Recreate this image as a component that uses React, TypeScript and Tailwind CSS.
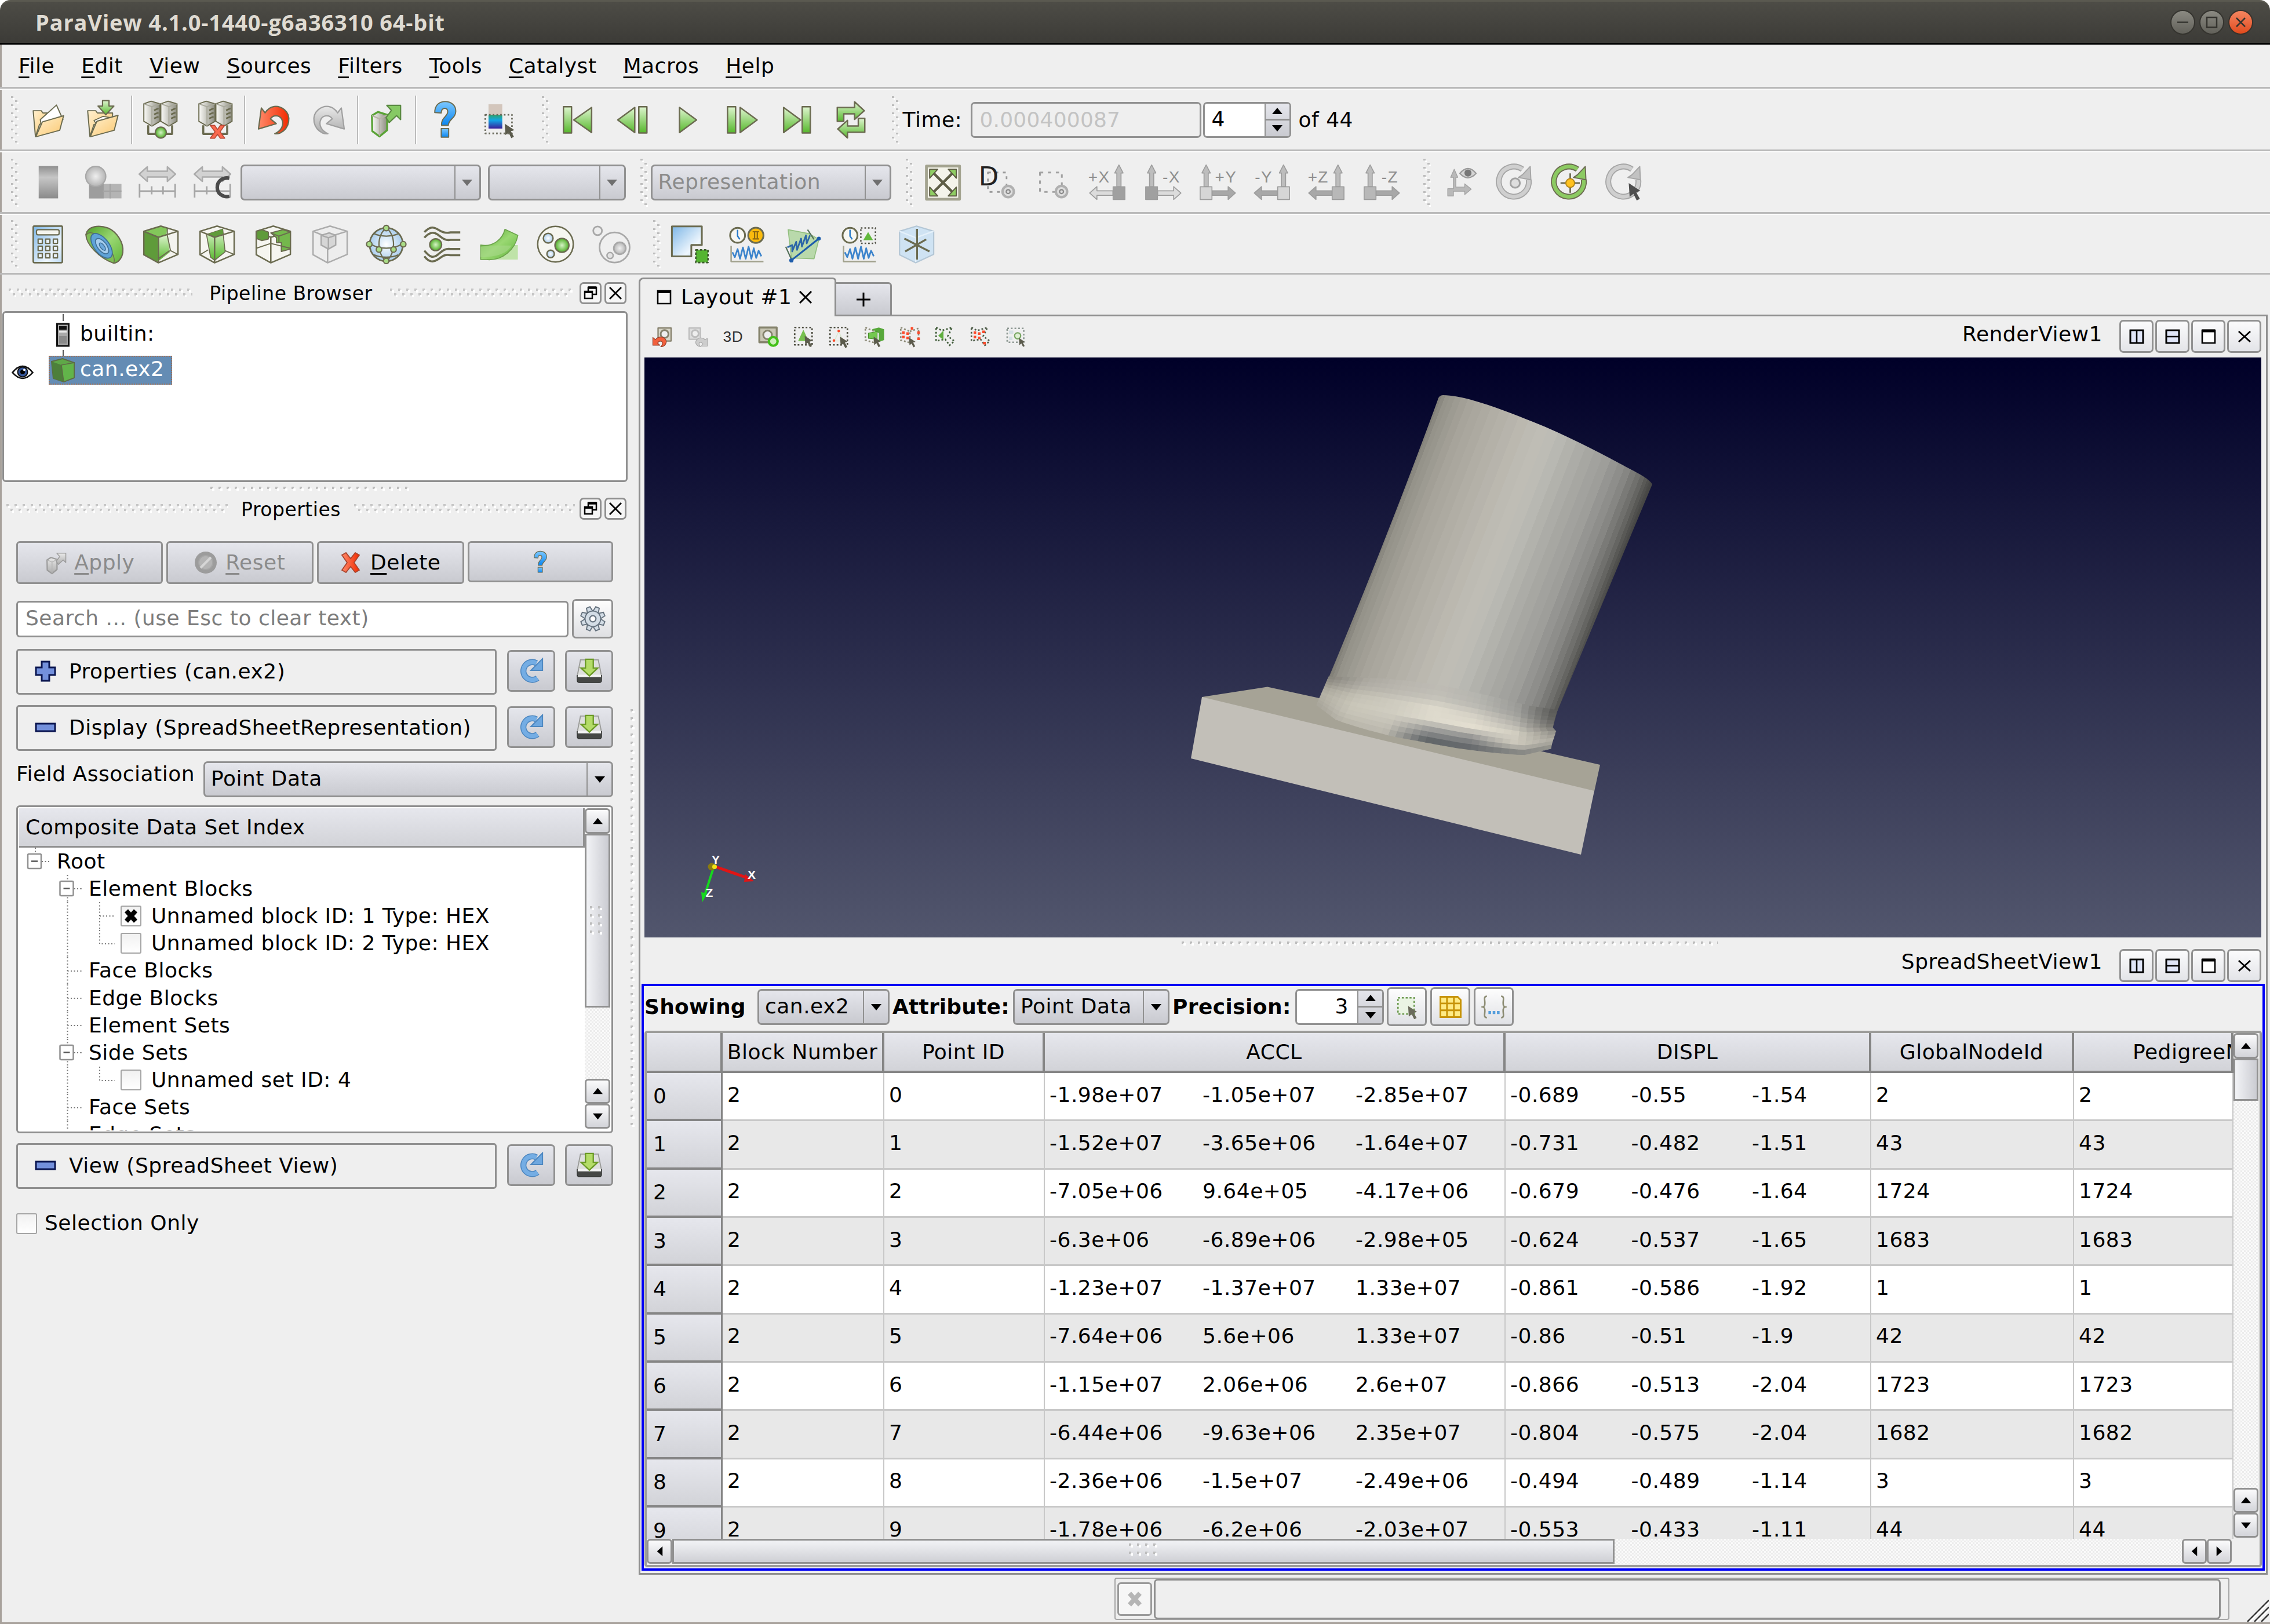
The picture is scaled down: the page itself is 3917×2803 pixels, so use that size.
import React from 'react';

type Kids = { children?: React.ReactNode };

const OL = '#6b6b50';
const G = '#a0a0a0';

/* ---------- shared paint definitions ---------- */
const Defs = () => (
  <svg width="0" height="0" className="absolute">
    <defs>
      <linearGradient id="gr" x1="0" y1="0" x2="0" y2="1"><stop offset="0" stopColor="#dff5d0" /><stop offset="1" stopColor="#56b82c" /></linearGradient>
      <linearGradient id="grh" x1="0" y1="0" x2="1" y2="1"><stop offset="0" stopColor="#4f9f28" /><stop offset=".5" stopColor="#9ad873" /><stop offset="1" stopColor="#5fb338" /></linearGradient>
      <radialGradient id="grr"><stop offset="0" stopColor="#d6f3c6" /><stop offset="1" stopColor="#4eae26" /></radialGradient>
      <radialGradient id="blr"><stop offset="0" stopColor="#ffffff" /><stop offset="1" stopColor="#a9cdec" /></radialGradient>
      <linearGradient id="bl" x1="0" y1="0" x2="1" y2="1"><stop offset="0" stopColor="#7db6e6" /><stop offset=".7" stopColor="#eef6fd" /><stop offset="1" stopColor="#b9d8f3" /></linearGradient>
      <linearGradient id="tan" x1="0" y1="0" x2="1" y2="1"><stop offset="0" stopColor="#fff0cf" /><stop offset="1" stopColor="#fbc870" /></linearGradient>
      <linearGradient id="sv" x1="0" y1="0" x2="1" y2="0"><stop offset="0" stopColor="#fbfbf8" /><stop offset="1" stopColor="#8d8d80" /></linearGradient>
      <linearGradient id="red" x1="0" y1="0" x2="1" y2="0"><stop offset="0" stopColor="#ff8a6a" /><stop offset="1" stopColor="#f32b00" /></linearGradient>
      <linearGradient id="gy" x1="0" y1="0" x2="0" y2="1"><stop offset="0" stopColor="#e9e9e9" /><stop offset="1" stopColor="#ababab" /></linearGradient>
      <radialGradient id="gyr"><stop offset="0" stopColor="#efefef" /><stop offset="1" stopColor="#b5b5b5" /></radialGradient>
      <linearGradient id="gyb" x1="0" y1="0" x2="0" y2="1"><stop offset="0" stopColor="#8f8f8f" /><stop offset=".35" stopColor="#c6c6c6" /><stop offset="1" stopColor="#8a8a8a" /></linearGradient>
      <linearGradient id="hb" x1="0" y1="0" x2="0" y2="1"><stop offset="0" stopColor="#7cc8ff" /><stop offset="1" stopColor="#0a86f0" /></linearGradient>
      <linearGradient id="rain" x1="0" y1="0" x2="0" y2="1"><stop offset="0" stopColor="#2aa36a" /><stop offset=".4" stopColor="#12a5e6" /><stop offset="1" stopColor="#3a1f9a" /></linearGradient>
      <pattern id="dotsH" width="14" height="18" patternUnits="userSpaceOnUse">
        <rect x="1" y="1" width="4" height="4" fill="#c6c6c6" /><rect x="4" y="4" width="4" height="4" fill="#fff" />
        <rect x="8" y="9" width="4" height="4" fill="#c6c6c6" /><rect x="11" y="12" width="3" height="4" fill="#fff" />
      </pattern>
      <pattern id="dots1" width="14" height="14" patternUnits="userSpaceOnUse">
        <rect x="1" y="1" width="4" height="4" fill="#bdbdbd" /><rect x="4" y="4" width="4" height="4" fill="#fff" />
      </pattern>
      <pattern id="dotsV" width="18" height="14" patternUnits="userSpaceOnUse">
        <rect x="1" y="1" width="4" height="3" fill="#bdbdbd" /><rect x="4" y="4" width="3" height="3" fill="#fff" />
        <rect x="8" y="8" width="4" height="3" fill="#bdbdbd" /><rect x="11" y="11" width="3" height="3" fill="#fff" />
      </pattern>
      <pattern id="hatch" width="6" height="6" patternUnits="userSpaceOnUse">
        <rect width="6" height="6" fill="#fafafa" /><rect width="3" height="3" fill="#ececec" /><rect x="3" y="3" width="3" height="3" fill="#ececec" />
      </pattern>
    </defs>
  </svg>
);

const Fill = ({ id, w, h }: { id: string; w: number; h: number }) => (
  <svg width={w} height={h} className="block shrink-0"><rect width={w} height={h} fill={`url(#${id})`} /></svg>
);

const Ic = ({ children, s = 67 }: Kids & { s?: number }) => (
  <svg width={s} height={s} viewBox="0 0 24 24" className="block shrink-0 overflow-visible" strokeLinejoin="round">{children}</svg>
);

/* ---------- main toolbar icons ---------- */
const FolderBase = () => (
  <path d="M2.6 6.5h5l1 1.4h3.4v4L6.5 15 4 22.5z" fill="url(#tan)" stroke={OL} strokeWidth=".7" />
);
const OpenIcon = () => (
  <Ic><FolderBase /><path d="M7 12 17 3l4 9-13 6z" fill="#fff" stroke={OL} strokeWidth=".7" /><path d="M8.3 13.4 21.4 9.6 19 18.6 4.2 22.6z" fill="url(#tan)" stroke={OL} strokeWidth=".7" /></Ic>
);
const OpenRecentIcon = () => (
  <Ic>
    <path d="M2.6 6.5h5l1 1.4H18v4L6.5 15 4 22.5z" fill="url(#tan)" stroke={OL} strokeWidth=".7" />
    <path d="M6.5 12.5 12 10l7 1-10 5z" fill="#fff" stroke={OL} strokeWidth=".6" />
    <path d="M8.3 13 21.4 9.3 19 18.6 4.2 22.6z" fill="url(#tan)" stroke={OL} strokeWidth=".7" />
    <path d="M11.8.2h4v3.4h3L13.8 9 9 3.6h2.8z" fill="url(#gr)" stroke={OL} strokeWidth=".8" />
  </Ic>
);
const Tower = ({ x }: { x: number }) => (
  <g transform={`translate(${x} 0)`} stroke={OL} strokeWidth=".7">
    <path d="M.5 2.2 5 .6l5.5 1.6V13l-5 3L.5 13z" fill="url(#sv)" />
    <path d="M.5 2.2 5.5 4v12M5.5 4l5-1.8" fill="none" stroke="#a9a99c" />
    <path d="M6.800 6.300 9.600 5M6.800 8.800l2.800-1.200M6.800 11.300l2.800-1.200" fill="none" strokeWidth="1" />
  </g>
);
const ServerIcon = ({ off }: { off?: boolean }) => (
  <Ic>
    <path d="M4.2 15.500v5.300H19v-5.300" fill="none" stroke={OL} strokeWidth="1.300" />
    <Tower x={1} /><Tower x={11.500} />
    {off
      ? <path d="M8.500 15.500h2.700l1.800 2.600 1.800-2.600h2.600L14.600 19.500l2.900 4h-2.800L13 21l-1.700 2.500H8.500l3-4z" fill="#fb6b50" stroke="#b94a36" strokeWidth=".6" />
      : <circle cx="12" cy="20" r="3.400" fill="url(#grr)" stroke={OL} strokeWidth=".8" />}
  </Ic>
);
const Curl = ({ fill, stroke, flip }: { fill: string; stroke: string; flip?: boolean }) => (
  <Ic>
    <g transform={flip ? 'matrix(-1 0 0 1 24 0)' : undefined}>
      <path d="M4.300 4.800 6.600 7.800C9.500 3.200 14.500 2.600 18.500 5.800c4.700 4 3.200 11.700-2.700 14.500-1 .4-2 .6-3.200.4 4-1.700 6-5.500 4.300-9-1.600-2.800-5.500-2.700-7-.2l3.600 3L2.500 17.800z" fill={fill} stroke={stroke} strokeWidth=".8" />
    </g>
  </Ic>
);
const ExtractArrow = ({ gray }: { gray?: boolean }) => (
  <>
    <path d="m2.800 9.500 3.700-2.300 5.700 1.800V18.500l-4.700 3.900-4.500-3.300z" fill={gray ? 'url(#gy)' : 'url(#sv)'} stroke={gray ? '#9b9b9b' : '#5aa336'} strokeWidth="1.200" />
    <path d="m2.800 9.500 4.700 2v10.500M7.500 11.500l4.700-2.300" fill="none" stroke={gray ? '#b5b5b5' : '#b9b3a8'} strokeWidth=".8" />
    <path d="M12 3.200h8.500v8.800L18 9.500l-4.500 4.300-2-3L14.800 6.300z" fill={gray ? 'url(#gy)' : '#86c964'} stroke={gray ? '#9b9b9b' : '#5b8a43'} strokeWidth=".8" />
  </>
);
const Help = () => (
  <>
    <path d="M5.800 7.600C5.800 3 8.600.8 12.200.8c3.800 0 6.600 2.300 6.600 6 0 4.400-4.600 5-4.600 8.700H10c-.3-5 3.800-5.300 3.800-8.400 0-1.400-.8-2.100-1.900-2.100-1.500 0-2 1.100-2.100 2.900z" fill="url(#hb)" stroke={OL} strokeWidth=".7" />
    <rect x="9.800" y="17.500" width="4.600" height="5.300" fill="url(#hb)" stroke={OL} strokeWidth=".7" />
  </>
);
const Cursor = ({ x, y, k = 1, c = '#5b5b4c' }: { x: number; y: number; k?: number; c?: string }) => (
  <path transform={`translate(${x} ${y}) scale(${k})`} d="M0 0 6.300 4.200 4 4.900 6 8.500 4.300 9.400 2.500 5.800.5 7.500z" fill={c} />
);
const PickColor = () => (
  <Ic>
    <rect x="5" y="2.500" width="8.500" height="7" fill="#d3c6bc" />
    <rect x="5" y="9" width="8.500" height="8.500" fill="url(#rain)" />
    <path d="M3 9h16.500v11.500H3z" fill="none" stroke="#6b6b5e" strokeWidth="1" strokeDasharray="1 1.300" />
    <Cursor x={15} y={14.500} k={0.950} />
  </Ic>
);
const tri = { fill: 'url(#gr)', stroke: OL, strokeWidth: 0.9 };
const First = () => <Ic><rect x="2.600" y="4" width="5" height="16.200" {...tri} /><path d="M20 4.500v15.500L9 12.200z" {...tri} /></Ic>;
const Prev = () => <Ic><rect x="15.500" y="4" width="5" height="16.200" {...tri} /><path d="M13 4.500v15.500L2.500 12.200z" {...tri} /></Ic>;
const Play = () => <Ic><path d="M7 4.500v15.500L17.500 12.200z" {...tri} /></Ic>;
const Next = () => <Ic><rect x="3" y="4" width="5" height="16.200" {...tri} /><path d="M10.800 4.500v15.500L21.300 12.200z" {...tri} /></Ic>;
const Last = () => <Ic><path d="M4 4.500v15.500L14.500 12.200z" {...tri} /><rect x="15.500" y="4" width="5" height="16.200" {...tri} /></Ic>;
const Loop = () => (
  <Ic>
    <path d="M3.500 4.500h10.700V1l6 5.500-6 5.300V8.400H7.500v4.700h-4z" {...tri} />
    <path d="M20.500 19.800H9.800v3.500l-6-5.500 6-5.300v3.400h6.700v-4.700h4z" {...tri} />
  </Ic>
);

/* ---------- second toolbar ---------- */
const Bar = () => <Ic><rect x="6" y="2" width="12" height="20" fill="url(#gyb)" /></Ic>;
const EditMap = () => (
  <Ic><rect x="3.500" y="13" width="20" height="9" fill="#b4b4b4" /><path d="M3.500 13h9v9h-9z" fill="#9d9d9d" /><path d="M16.500 13v9M12 17.500h11.500" stroke="#a4a4a4" strokeWidth=".8" /><circle cx="7.600" cy="8.400" r="6.200" fill="url(#gyr)" stroke="#a8a8a8" strokeWidth=".8" /></Ic>
);
const Rescale = ({ c }: { c?: boolean }) => (
  <Ic>
    <path d="m.8 7 5-4.500v2.700h12.400V2.500l5 4.500-5 4.500V8.800H5.800v2.700z" fill="#d2d2d2" stroke="#acacac" strokeWidth=".9" />
    <path d="M1 13v8.500M23 13v8.500M1 17.500h22M8.500 14.500v5M15.500 14.500v5" fill="none" stroke="#a6a6a6" strokeWidth="1" />
    {c && <path d="M22.500 9.500c-4-.8-7.500 1.800-7.500 5.700s3.500 6.300 7.500 5.600" fill="none" stroke="#4b4b4b" strokeWidth="2.200" />}
  </Ic>
);
const ResetCamera = () => (
  <Ic>
    <rect x="2" y="2" width="20.500" height="20.500" fill="#f4f4ea" stroke="#a3a38f" strokeWidth="1.700" />
    <path d="m5.500 5.500 13.500 13.500M19 5.500 5.500 19" stroke="#5d5d45" strokeWidth="1.600" />
    <path d="M4 4h5L4 9.500zM20.500 4h-5l5 5.500zM4 20.500h5L4 15zM20.500 20.500h-5l5-5.500z" fill="#8fce63" stroke="#5d5d45" strokeWidth=".7" />
  </Ic>
);
const Mag = ({ x, y }: { x: number; y: number }) => <><circle cx={x} cy={y} r="3.500" fill="#dedede" stroke="#b0b0b0" strokeWidth="1.500" /><circle cx={x} cy={y} r="1.200" fill="none" stroke="#8a8a8a" strokeWidth=".8" /></>;
const ZoomData = () => (
  <Ic><path d="M6 6h11.500v12H6z" fill="none" stroke="#9a9a9a" strokeWidth="1" strokeDasharray="1.800 2.800" /><Mag x={18.500} y={17.800} />
    <text x=".3" y="14" fontSize="16" fontFamily="DejaVu Sans" fill="#222">D</text></Ic>
);
const ZoomBox = () => <Ic><path d="M4.500 6h13.500v12H4.500z" fill="none" stroke="#a2a2a2" strokeWidth="1.100" strokeDasharray="2 2.900" /><Mag x={17.800} y={17.800} /></Ic>;
const AxisView = ({ label, left, box, arm }: { label: string; left?: boolean; box: string; arm: string }) => (
  <Ic>
    <g transform={left ? 'matrix(-1 0 0 1 24 0)' : undefined} stroke="#9d9d9d" strokeWidth=".6">
      <path d="m18.900 1.300 2.600 5h-1.300v8.500h-2.600V6.300h-1.300z" fill="#bdbdbd" />
      <path d="m.8 18.700 4.500-4v2.600h9.900v2.800H5.300v2.600z" fill={arm} />
      <rect x="15.300" y="14.800" width="7.300" height="7.900" fill={box} />
    </g>
    <text x={left ? 17.300 : 6.700} y="12" fontSize="10" textAnchor="middle" fontFamily="Liberation Sans" fill="#8e8e8e">{label}</text>
  </Ic>
);
const ShowAxes = () => (
  <Ic><path d="M4 20.500v-4.500h3.500V9H5.800L8 4l2.200 5H9v6h5.500v-2l4 3.300-4 3.300v-2H7.500v2.900z" fill="#b9b9b9" stroke="#a2a2a2" strokeWidth=".5" />
    <path d="M11.500 6.500q5-6 10 0-5 5.500-10 0z" fill="#d5d5d5" stroke="#9a9a9a" strokeWidth=".8" /><circle cx="16.500" cy="6.300" r="2.200" fill="#777" /></Ic>
);
const Rot = ({ kind }: { kind: 'c' | 'g' | 'p' }) => {
  const g = kind === 'g';
  return (
    <Ic>
      <path d="M20.400 10.500A9.300 9.300 0 1 1 16.500 4" fill="none" stroke={g ? OL : '#a6a6a6'} strokeWidth="3.600" />
      <path d="M20.400 10.500A9.300 9.300 0 1 1 16.500 4" fill="none" stroke={g ? '#8cca62' : '#cfcfcf'} strokeWidth="2.300" />
      <path d="m21.300 2.300.4 8.200-7.700-1.400 2.500-1.700z" fill={g ? '#8cca62' : '#c2c2c2'} stroke={g ? OL : '#a6a6a6'} strokeWidth=".7" />
      {kind === 'c' && <circle cx="12" cy="12.500" r="2.900" fill="#dedede" stroke="#a2a2a2" strokeWidth="1.100" />}
      {g && <><path d="M12 6.500v12M6 12.500h12" stroke={OL} strokeWidth="1" /><circle cx="12" cy="12.500" r="2.700" fill="#ffc21f" stroke="#b28516" strokeWidth=".7" /></>}
      {kind === 'p' && <Cursor x={14.500} y={12.500} k={1.150} c="#4e4e4e" />}
    </Ic>
  );
};

/* ---------- third toolbar ---------- */
const Calc = () => (
  <Ic>
    <rect x="3" y=".8" width="18" height="22.600" rx=".8" fill="url(#bl)" stroke={OL} strokeWidth="1" />
    <rect x="5" y="3" width="14" height="3.200" rx="1" fill="#f5f5ee" stroke={OL} strokeWidth=".8" />
    {[8.800, 13.200, 17.800].map((y) => [6, 10.700, 15.400].map((x) => <rect key={`${x}${y}`} x={x} y={y} width="2.600" height="2.700" fill="#e9f2fa" stroke={OL} strokeWidth=".8" />))}
  </Ic>
);
const Contour = () => (
  <Ic>
    <path d="M.8 6C2 .5 9 0 14.500 2 20 4.500 24.300 11 23.600 17c-.4 3.500-2.800 6.500-5.600 6.700C9 20.500 1 12 .8 6z" fill="url(#grh)" stroke={OL} strokeWidth=".8" />
    <path d="M1 6.500C3 3 9 6 13 11c4 5 6.500 11 4.800 12.600C9 20.500 1 12 1 6.500z" fill="#7ebc55" stroke={OL} strokeWidth=".5" />
    <ellipse cx="10.500" cy="13" rx="4.600" ry="9" transform="rotate(-38 10.500 13)" fill="#5fa3d8" stroke="#3f6f96" strokeWidth=".6" />
    <ellipse cx="10.800" cy="13.200" rx="2.800" ry="5.600" transform="rotate(-38 10.800 13.200)" fill="#a5cdee" stroke="#3f6f96" strokeWidth=".6" />
    <ellipse cx="11" cy="13.500" rx="1.200" ry="2.800" transform="rotate(-38 11 13.500)" fill="#6da9dc" stroke="#3f6f96" strokeWidth=".5" />
  </Ic>
);
const CubeWire = ({ c = OL }: { c?: string }) => (
  <path d="M1.500 4 12 .8 22.600 4v14.300L10.500 23.500 1.500 18.500zM1.500 4l9 3.700L22.600 4M10.500 7.700v15.800" fill="none" stroke={c} strokeWidth=".9" />
);
const Clip = () => (
  <Ic>
    <path d="M1.500 4 12 .8 22.600 4v14.300L10.500 23.500 1.500 18.500z" fill="#f3f3ee" />
    <path d="M1.500 4 12 .8l4 1.200-.5 3.700L16.500 17 10.500 22 1.500 18.500z" fill="#83c75a" />
    <path d="M1.500 4 10 7.800v15L1.500 18.500z" fill="#5f9b3a" />
    <path d="M10.500 7.700 16 6l1.500 11-7 5.500z" fill="url(#gr)" />
    <CubeWire /><path d="M16 2v4.500l2 9.500 4 2M17.500 16l-7 5" fill="none" stroke={OL} strokeWidth=".7" />
  </Ic>
);
const Slice = () => (
  <Ic>
    <path d="M1.500 4 12 .8 22.600 4v14.300L10.500 23.500 1.500 18.500z" fill="#f5f5f0" />
    <path d="m5.500 6 10-3.300 1.500 14L10.500 22 8 20z" fill="url(#gr)" stroke={OL} strokeWidth=".6" />
    <path d="m5.500 6 10-3.300.3 3L10.500 7.700z" fill="#5f9b3a" />
    <CubeWire /><path d="m1.500 18.500 5-3M17 16l5.500 2.300" fill="none" stroke={OL} strokeWidth=".7" />
  </Ic>
);
const Threshold = () => (
  <Ic>
    <path d="M1.500 4 12 .8 22.600 4v14.300L10.500 23.500 1.500 18.500z" fill="#f5f5f0" />
    <CubeWire />
    <path d="M1.800 4 5 3l4 1.500v4.300L5 9.800 1.800 8.500z" fill="#5f9b3a" stroke={OL} strokeWidth=".7" />
    <path d="m10.500 5 7.500-2 4.600 1.500V15l-5.600 1.500V11h-3V8z" fill="#74b84c" stroke={OL} strokeWidth=".7" />
    <path d="m10.500 5 5 2v4M15.500 7l7-2.500M1.500 14.500l9-3 12 3" fill="none" stroke={OL} strokeWidth=".7" />
  </Ic>
);
const Subset = () => (
  <Ic><path d="M1.500 4 12 .8 22.600 4v14.300L10.500 23.500 1.500 18.500z" fill="#ededed" /><CubeWire c="#acacac" />
    <path d="M6.500 6.500 11.500 5l4 1.500v6L11 15l-4.500-2.500zM6.500 6.500 11 8v7M11 8l4.500-1.500" fill="#d6d6d6" stroke="#a9a9a9" strokeWidth=".9" /></Ic>
);
const Glyph = () => (
  <Ic>
    <circle cx="12" cy="12.200" r="10.300" fill="url(#blr)" stroke={OL} strokeWidth="1" />
    <path d="M12 2C6 6 6 18 12 22.500M12 2c6 4 6 16 0 20.500M2 11.500c5 4 15 4 20 0M4.500 5.500c4 2 11 2 15 0M4.500 18.500c4 2 11 2 15 0" fill="none" stroke={OL} strokeWidth=".8" />
    {[[12, 2], [12, 22.300], [1.500, 12], [22.500, 12], [7.500, 15.300], [16.500, 15.300]].map(([x, y]) => <circle key={`${x}-${y}`} cx={x} cy={y} r="1.700" fill="#a9dc86" stroke={OL} strokeWidth=".8" />)}
  </Ic>
);
const Stream = () => (
  <Ic>
    <path d="M.8 4.500C4 1.500 6 1 8.500 2.500S13 5.500 17 4.700h6M.8 8C4 4.500 6.500 4.200 9 6s4.500 4 8 3.300h6M.8 16c3 3.500 5 5 8 2.700S13 14.500 17 15h6M.8 19.500C3.500 23 6 23.500 9 21.500s4.500-3.500 8-2.700h6" fill="none" stroke={OL} strokeWidth="1.300" />
    <circle cx="7.800" cy="12.300" r="3.700" fill="url(#grr)" stroke={OL} strokeWidth=".8" />
  </Ic>
);
const Warp = () => (
  <Ic>
    <path d="M.5 12.500h23v9H.5z" fill="#bfe3a8" />
    <path d="M.5 12.500C8 14 14 9 15.500 2.800l8 3.700C22 15 14 22.500 4 21.500H.5z" fill="url(#grh)" stroke="#6ba34b" strokeWidth=".6" />
    <path d="M8 12.800h11.500C17 17.500 11 20 .5 20v-6.500z" fill="#a9d98a" opacity=".6" />
  </Ic>
);
const Group = () => (
  <Ic><circle cx="12" cy="12" r="11" fill="#f6f6f0" stroke={OL} strokeWidth=".9" /><circle cx="7.500" cy="8.300" r="3" fill="url(#blr)" stroke={OL} strokeWidth=".9" /><circle cx="16" cy="12.700" r="4.300" fill="url(#grr)" stroke={OL} strokeWidth=".9" /><circle cx="9" cy="18" r="2.300" fill="url(#blr)" stroke={OL} strokeWidth=".9" /></Ic>
);
const Level = () => (
  <Ic><circle cx="13.800" cy="14" r="9.300" fill="#efefef" stroke="#a8a8a8" strokeWidth="1" /><circle cx="3.300" cy="3.700" r="2.700" fill="#ededed" stroke="#a8a8a8" strokeWidth="1" /><circle cx="17" cy="14.500" r="3.700" fill="url(#gyr)" stroke="#a8a8a8" strokeWidth="1" /><circle cx="11" cy="19" r="1.900" fill="#e3e3e3" stroke="#a8a8a8" strokeWidth=".9" /></Ic>
);
const SelFrustum = () => (
  <Ic><path d="M.5 1h18.500v11.500h-6.500v7H.5z" fill="url(#bl)" stroke={OL} strokeWidth="1.100" /><rect x="15.300" y="15.500" width="7.500" height="7.800" fill="#55b531" stroke="#3e5c2e" strokeWidth="1" strokeDasharray="1.500 1" /></Ic>
);
const Wave = () => (
  <path d="m2.800 17 1.500 3L6 15l1.500 6L9.300 14l1.700 7 1.800-7.500L14.500 21 16 14.500l1.500 6L19 16l1.700 3.500" fill="none" stroke="#3c84cc" strokeWidth="1" />
);
const Clock = ({ x }: { x: number }) => <><circle cx={x} cy="6.500" r="4.600" fill="#f7f7f2" stroke={OL} strokeWidth="1.100" /><path d={`M${x} 3v4l1.400 2`} fill="none" stroke="#2b7cc9" strokeWidth=".9" /></>;
const PlotTime = () => (
  <Ic><Clock x={6} /><circle cx="17.300" cy="6.500" r="4.700" fill="#fbbb0d" stroke={OL} strokeWidth="1.100" /><path d="M15.300 4.300h4M15.300 8.700h4M16.500 4.300v4.400M18.200 4.300v4.400" stroke="#8f6a10" strokeWidth=".8" /><Wave /><path d="M2 13v9.700h20" fill="none" stroke="#a3a38f" strokeWidth=".9" /></Ic>
);
const PlotLine = () => (
  <Ic>
    <path d="m2.500 3 13 2.500 6 3.500-3 12-14-.5z" fill="#b9d9ab" stroke="#93bf80" strokeWidth=".6" />
    <path d="m2 14 3-1.500 0 4 2.500-6 .5 5 2.500-7 .5 5 2.500-7 .5 5 2-5" fill="none" stroke="#2c66a8" strokeWidth="1" />
    <path d="m1 13.500 3.800 8.500M14.500 3l4 6" stroke="#55715a" strokeWidth=".8" /><path d="m4.500 22 17-13.500" stroke="#1d5cab" strokeWidth="1.100" />
    <circle cx="21.500" cy="8.500" r="1.200" fill="#1d5cab" /><circle cx="4.500" cy="22" r="1.300" fill="#1d5cab" />
  </Ic>
);
const PlotSel = () => (
  <Ic><Clock x={6} /><path d="M12.700 2h9v9.500h-9z" fill="none" stroke="#55554a" strokeWidth=".9" strokeDasharray="1 1.200" /><path d="m17.200 4.500 3 5h-6z" fill="#62b93c" /><Wave /><path d="M2 13v9.700h20" fill="none" stroke="#a3a38f" strokeWidth=".9" /></Ic>
);
const Probe = () => (
  <Ic><path d="M1.500 4 12 .8 22.600 4v14.300L11.500 23.500 1.500 18.500z" fill="#cfe3f3" stroke="#b4c7d6" strokeWidth=".8" /><path d="m1.500 4 10 4 11-4M11.500 8v15" fill="none" stroke="#e6f1fa" strokeWidth=".8" /><path d="M12.300 2.500v19M4.500 8.500l15.500 8M5 16.500 18 9" stroke={OL} strokeWidth="1.200" /></Ic>
);

/* ---------- view toolbar icons ---------- */
const Cam = ({ c, f }: { c: string; f: string }) => <><path d="M7 2h15v15H7z" fill={f} stroke={c} strokeWidth="1.500" /><circle cx="14.500" cy="9" r="4.500" fill="#eee" stroke={c} strokeWidth="2" /></>;
const dash = (c: string, d: string) => <path d={d} fill="none" stroke={c} strokeWidth="1.800" strokeDasharray="2 2.200" />;
const viewIcons: React.ReactNode[] = [
  <><Cam c="#85806c" f="#d8d6c8" /><path d="M1 13v9h8l-2.500-2.500c2-3.500 5-3 5.500-.5.500 2-1 4-2 4.500 5 .5 8-5 5.500-8.500-3-4-9-3-11.500.5z" fill="#f2603d" stroke="#97402c" strokeWidth=".8" /></>,
  <><path d="M2 2h13v13H2z" fill="#dedede" stroke="#bdbdbd" strokeWidth="1.500" /><circle cx="9" cy="8.500" r="4" fill="#eee" stroke="#bdbdbd" strokeWidth="2" /><path d="M23 14v9h-7l2-2.500c-2-3-4.500-2-4.500 0 0 1.500 1 2.500 2 3-5 0-7-4.500-5-7.500 2.500-3.500 7.500-3 10-.5z" fill="#cdcdcd" stroke="#ababab" strokeWidth=".8" /></>,
  <text x="12" y="18" fontSize="17.500" textAnchor="middle" fontFamily="Liberation Sans" fill="#333">3D</text>,
  <><rect x="1.500" y="1.500" width="20" height="17" fill="#c9c7b4" stroke="#85836c" strokeWidth="2.200" /><circle cx="11" cy="10" r="5" fill="#eee" stroke="#85836c" strokeWidth="2" /><circle cx="17.500" cy="17.500" r="5" fill="#cdeebb" stroke="#43c018" strokeWidth="2.800" /></>,
  <>{dash('#4d4d40', 'M1.500 1.500h20v20h-20z')}<path d="m11.500 4 6 13h-12z" fill="#77c04e" /><Cursor x={13} y={11} k={1.400} /></>,
  <>{dash('#4d4d40', 'M1.500 1.500h20v20h-20z')}<path d="m11.500 6-5 11h10z" fill="none" stroke="#d9e8d0" strokeWidth="1" /><circle cx="11.500" cy="5.500" r="1.500" fill="#fb4a2a" /><circle cx="6" cy="16.500" r="1.500" fill="#fb4a2a" /><circle cx="17" cy="16.500" r="1.500" fill="#fb4a2a" /><Cursor x={13} y={12} k={1.400} /></>,
  <>{dash('#8d8b78', 'M1.500 1.500 12 6v13L1.500 16z')}<path d="m9 3.500 8-2 6 2V16l-6 2V8z" fill="#57a83a" /><path d="m5 8 10-2v9L5 14z" fill="#74c950" stroke="#4a8d2e" strokeWidth=".8" /><Cursor x={11} y={12} k={1.300} /></>,
  <>{dash('#8d8b78', 'M1.500 1.500 12 6v13L1.500 16zM12 6l10-3.500V16')}<path d="M3 6h3v3H3zM8 7h3v3H8zM3 11h3v3H3zM8 12h3v3H8zM13 1h3v3h-3zM20.500 6h3v3h-3zM20.500 13h3v3h-3z" fill="#fb4a2a" /><Cursor x={11} y={13} k={1.200} /></>,
  <>{dash('#3f5b38', 'M1.500 1.500 8 5l12-3.500-5 10L22.500 17 17 22 12 15 1.500 17z')}<path d="M10 5v11l-6-5z" fill="#5fae3e" /></>,
  <>{dash('#4d5b48', 'M1.500 1.500 8 5l12-3.500-5 10L22.500 17 17 22 12 15 1.500 17z')}<path d="M4 6h3v3H4zM9 7h3v3H9zM4 11h3v3H4zM9 12h3v3H9zM14 5h3v3h-3zM15 18h3v3h-3z" fill="#fb4a2a" /></>,
  <>{dash('#8f9a94', 'M2 2.500h19v16H2z')}<path d="M4 5h5v4H4zM4 12h4v4H4z" fill="#d5e0e4" /><circle cx="14" cy="11" r="3.500" fill="#dff0d4" stroke="#79a764" strokeWidth="1.500" /><Cursor x={15.500} y={13.500} k={1.100} /></>,
];

/* ---------- generic widgets ---------- */
const grad = 'bg-linear-to-b from-[#e5e6ec] to-[#c9cad0]';
const Tri = ({ dir, c = '#000', w = 18 }: { dir: 'u' | 'd' | 'l' | 'r'; c?: string; w?: number }) => (
  <svg width={w} height={w} viewBox="0 0 18 18" className="block">
    <path d={{ u: 'M0 14 9 3l9 11z', d: 'M0 4h18L9 15z', l: 'M14 0v18L4 9z', r: 'M4 0v18l10-9z' }[dir]} fill={c} />
  </svg>
);
const Combo = ({ text = '', cls, off }: { text?: string; cls: string; off?: boolean }) => (
  <div className={`flex h-[62px] shrink-0 rounded-[7px] border-[3px] border-[#919191] ${grad} ${cls}`}>
    <div className={`flex flex-1 items-center overflow-hidden pb-[2px] pl-[10px] whitespace-nowrap ${off ? 'text-[#8b8b8b]' : ''}`}>{text}</div>
    <div className="flex w-[43px] items-center justify-center border-l-2 border-[#919191]"><Tri dir="d" c={off ? '#6f6f6f' : '#000'} /></div>
  </div>
);
const Spin = ({ text, cls, right }: { text: string; cls: string; right?: boolean }) => (
  <div className={`flex h-[62px] shrink-0 overflow-hidden rounded-[7px] border-[3px] border-[#919191] bg-white ${cls}`}>
    <div className={`flex flex-1 items-center pb-[2px] ${right ? 'justify-end pr-[15px]' : 'pl-[12px]'}`}>{text}</div>
    <div className={`flex w-[43px] flex-col border-l-2 border-[#919191] ${grad}`}>
      <div className="flex flex-1 items-center justify-center border-b-[3px] border-[#919191]"><Tri dir="u" /></div>
      <div className="flex flex-1 items-center justify-center"><Tri dir="d" /></div>
    </div>
  </div>
);
const SBtn = ({ dir, cls }: { dir: 'u' | 'd' | 'l' | 'r'; cls: string }) => (
  <div className={`flex shrink-0 items-center justify-center rounded-[6px] border-[3px] border-[#919191] bg-linear-to-b from-[#fbfbfc] to-[#d3d4d9] ${cls}`}><Tri dir={dir} w={17} /></div>
);
const Grip = () => <div className="flex w-[18px] shrink-0 justify-center"><Fill id="dotsV" w={18} h={84} /></div>;
const Cell = ({ children, cls = 'w-[94.4px]' }: Kids & { cls?: string }) => <div className={`flex shrink-0 items-center justify-center ${cls}`}>{children}</div>;
const Sep = () => <div className="mx-[1.500px] h-[84px] w-[3px] shrink-0 border-l-2 border-[#bcbcbc] bg-white" />;
const toolbar = 'flex shrink-0 items-center border-b-[3px] border-b-[#bababa] border-t-[2px] border-t-[#fbfbfb] pl-[18px]';
const U = ({ children }: Kids) => <span className="underline decoration-[2.500px] underline-offset-[6px]">{children}</span>;

const DockButtons = () => (
  <div className="flex gap-[5px]">
    <div className="flex h-[38px] w-[38px] items-center justify-center rounded-[7px] border-[3px] border-[#8f8f8f] bg-[#f6f6f6]">
      <svg width="26" height="26" viewBox="0 0 26 26" fill="none" stroke="#000" strokeWidth="2.500"><path d="M9 9V3h14v12h-6" /><path d="M9 3.500h14" strokeWidth="4.500" /><path d="M3 10h13v12H3z" /><path d="M3 11h13" strokeWidth="4" /></svg>
    </div>
    <div className="flex h-[38px] w-[38px] items-center justify-center rounded-[7px] border-[3px] border-[#8f8f8f] bg-[#f6f6f6]">
      <svg width="24" height="24" viewBox="0 0 24 24" stroke="#000" strokeWidth="2.800"><path d="m2 2 20 20M22 2 2 22" /></svg>
    </div>
  </div>
);

/* ---------- left column ---------- */
const Section = ({ text, open, cls }: { text: string; open?: boolean; cls: string }) => (
  <div className={`flex items-center ${cls}`}>
    <div className="flex h-[79px] w-[829px] items-center rounded-[5px] border-[3px] border-[#8f8f8f] bg-[#efefef] pb-[2px] pl-[29px]">
      <svg width="37" height="37" viewBox="0 0 37 37" className="mr-[22px]">
        <path d={open ? 'M2 12h33v13H2z' : 'M12 2h13v10h10v13H25v10H12V25H2V12h10z'} fill="#7390dc" stroke="#0b1650" strokeWidth="3" />
      </svg>
      {text}
    </div>
    <div className={`-mt-[4px] ml-[18px] flex h-[72px] w-[83px] items-center justify-center rounded-[7px] border-[3px] border-[#919191] ${grad}`}>
      <svg width="46" height="46" viewBox="0 0 24 24" fill="none">
        <path d="M17.500 18.500a8 8 0 1 1-1-13.500" stroke="#4d87c0" strokeWidth="5.400" /><path d="M22 1v10.500H11.500l3.800-3.800z" fill="#6ea7df" stroke="#4d87c0" /><path d="M17.500 18.500a8 8 0 1 1-1-13.500" stroke="#74ade4" strokeWidth="3.800" />
      </svg>
    </div>
    <div className={`-mt-[4px] ml-[17px] flex h-[72px] w-[83px] items-center justify-center rounded-[7px] border-[3px] border-[#919191] ${grad}`}>
      <svg width="46" height="46" viewBox="0 0 24 24">
        <path d="M4 2h16l3 15H1z" fill="#dedfdd" stroke="#9b9c9a" /><path d="M1 16h22v4.500q0 2-2 2H3q-2 0-2-2z" fill="#454745" stroke="#2e302e" strokeWidth=".6" /><path d="M1.500 16.500h21" stroke="#f2f2f2" strokeWidth="2.200" />
        <path d="M8.500 1.500h7v8h4L12 16.500l-7.500-7h4z" fill="#b4dc68" stroke="#6b9a26" strokeWidth="1.200" />
      </svg>
    </div>
  </div>
);

const Check = ({ on }: { on?: boolean }) => (
  <div className="flex h-[36px] w-[36px] shrink-0 items-center justify-center rounded-[3px] border-[2.500px] border-[#a5a5a5] bg-linear-to-b from-[#f1f1f1] to-white">
    {on && <svg width="28" height="28" viewBox="0 0 28 28"><path d="m6 5 16 18M22 5 6 23" stroke="#000" strokeWidth="8" /></svg>}
  </div>
);

type Row = { t: string; lv: number; exp?: boolean; chk?: boolean; on?: boolean; last?: boolean };
const rows: Row[] = [
  { t: 'Root', lv: 0, exp: true },
  { t: 'Element Blocks', lv: 1, exp: true },
  { t: 'Unnamed block ID: 1 Type: HEX', lv: 2, chk: true, on: true },
  { t: 'Unnamed block ID: 2 Type: HEX', lv: 2, chk: true, last: true },
  { t: 'Face Blocks', lv: 1 },
  { t: 'Edge Blocks', lv: 1 },
  { t: 'Element Sets', lv: 1 },
  { t: 'Side Sets', lv: 1, exp: true },
  { t: 'Unnamed set ID: 4', lv: 2, chk: true, last: true },
  { t: 'Face Sets', lv: 1 },
  { t: 'Edge Sets', lv: 1 },
];
const TreeRow = ({ r }: { r: Row }) => {
  const x = 28 + r.lv * 55.500;
  const d = { stroke: '#7a7a7a', strokeWidth: 2, strokeDasharray: '2 3.500', fill: 'none' };
  return (
    <div className="flex h-[47.200px] shrink-0 items-center whitespace-nowrap">
      <svg width={r.lv === 2 ? 175 : 65 + r.lv * 55} height="47.200" className="block shrink-0">
        {r.lv > 0 && <path d="M83.500 0v47" {...d} />}
        {r.lv === 2 && <path d={r.last ? 'M139 0v24h26' : 'M139 0v47M139 24h26'} {...d} />}
        {r.lv === 0 && <path d="M28 0v14" {...d} />}
        {r.lv === 1 && <path d="M83.500 24h26" {...d} />}
        {r.exp && <><path d={`M${x} 24h26`} {...d} /><rect x={x - 13} y="11" width="23" height="25" rx="2" fill="#fff" stroke="#919191" strokeWidth="2.500" /><path d={`M${x - 7} 23.500h11`} stroke="#555" strokeWidth="2.500" /></>}
      </svg>
      {r.chk && <div className="mr-[17px]"><Check on={r.on} /></div>}
      <span>{r.t}</span>
    </div>
  );
};

const LeftPanel = () => (
  <div className="flex w-[1102px] shrink-0">
    <div className="flex w-[1084px] shrink-0 flex-col">
      <div className="flex h-[63px] shrink-0 items-center pl-[14px]">
        <Fill id="dotsH" w={318} h={18} />
        <div className="w-[340px] pt-[2px] text-center text-[33px]">Pipeline Browser</div>
        <Fill id="dotsH" w={316} h={18} />
        <div className="ml-[12px]"><DockButtons /></div>
      </div>
      <div className="ml-[4px] flex h-[295px] w-[1079px] shrink-0 flex-col rounded-[6px] border-[3px] border-[#8f8f8f] bg-white">
        <div className="flex h-[74px] items-center pl-[90px]">
          <svg width="41" height="74" viewBox="0 0 41 74" className="block">
            <path d="M12 2v12M12 64v10" stroke="#555" strokeWidth="2" />
            <rect x="1.500" y="19" width="20" height="38" fill="#a9a9a9" stroke="#111" strokeWidth="3" /><rect x="5" y="23" width="13" height="6" fill="#111" /><rect x="5" y="31" width="13" height="3" fill="#e8e8e8" /><rect x="5" y="40" width="13" height="13" fill="#8a8a8a" />
          </svg>
          <span className="-mt-[3px]">builtin:</span>
        </div>
        <div className="flex h-[50px] items-center pl-[13px]">
          <svg width="38" height="28" viewBox="0 0 38 28" className="mt-[8px]"><path d="M1.500 14Q19-8 36.500 14 19 34 1.500 14z" fill="#fff" stroke="#111" strokeWidth="2.600" /><circle cx="19" cy="13" r="8.500" fill="#35569b" stroke="#111" strokeWidth="2" /><circle cx="19" cy="13" r="4" fill="#000" /><circle cx="22" cy="9.500" r="2" fill="#fff" /></svg>
          <div className="ml-[26px] flex h-[50px] w-[213px] items-center border-2 border-dotted border-[#9c7058] bg-[#648cb4] pl-[2px] text-white">
            <svg width="42" height="42" viewBox="0 0 42 42" className="mr-[8px]"><path d="M1 6 20 1l20 7v26l-18 7L4 35z" fill="#5fa848" stroke="#5d6b45" strokeWidth="2" /><path d="M1 6l17 6 4 29L4 35z" fill="#4d7f3a" /><path d="m18 12 22-4v26l-18 7z" fill="#62b44a" stroke="#5d6b45" strokeWidth="1.500" /></svg>
            <span className="-mt-[5px]">can.ex2</span>
          </div>
        </div>
      </div>
      <div className="flex h-[23px] shrink-0 items-center pl-[362px]"><Fill id="dots1" w={344} h={9} /></div>
      <div className="flex h-[50px] shrink-0 items-center pb-[4px] pl-[10px]">
        <Fill id="dotsH" w={384} h={18} />
        <div className="w-[216px] pt-[3px] text-center text-[33px]">Properties</div>
        <Fill id="dotsH" w={382} h={18} />
        <div className="ml-[8px]"><DockButtons /></div>
      </div>
      <div className="ml-[28px] flex w-[1030px] flex-col">
        <div className="mt-[29px] flex h-[74px] gap-[6px]">
          <div className={`flex w-[253px] items-center justify-center rounded-[6px] border-[3px] border-[#919191] text-[#8b8b8b] ${grad}`}><Ic s={44}><ExtractArrow gray /></Ic><span className="ml-[8px]"><U>A</U>pply</span></div>
          <div className={`flex w-[255px] items-center justify-center rounded-[6px] border-[3px] border-[#919191] text-[#8b8b8b] ${grad}`}>
            <svg width="40" height="40" viewBox="0 0 40 40"><circle cx="20" cy="20" r="19" fill="#9c9c9c" /><circle cx="20" cy="20" r="12" fill="#b4b4b4" stroke="#a6a6a6" strokeWidth="2" /><path d="m11 29 18-18" stroke="#d6d6d6" strokeWidth="4" /></svg>
            <span className="ml-[14px]"><U>R</U>eset</span></div>
          <div className={`flex w-[254px] items-center justify-center rounded-[6px] border-[3px] border-[#919191] ${grad}`}>
            <svg width="36" height="36" viewBox="0 0 36 36"><path d="M3 5 10 1l8 10 8-10 7 4-9 13 9 13-7 4-8-10-8 10-7-4 9-13z" fill="url(#red)" stroke="#a8452f" strokeWidth="1.800" /></svg>
            <span className="ml-[16px]"><U>D</U>elete</span></div>
          <div className={`flex h-[71px] w-[252px] items-center justify-center rounded-[6px] border-[3px] border-[#919191] ${grad}`}><Ic s={40}><Help /></Ic></div>
        </div>
        <div className="mt-[26px] flex h-[68px] items-center gap-[6px]">
          <div className="flex h-[63px] w-[953px] items-center rounded-[6px] border-[3px] border-[#8f8f8f] bg-white pb-[2px] pl-[13px] text-[#7d7d7d]">Search ... (use Esc to clear text)</div>
          <div className="flex h-[68px] w-[71px] items-center justify-center rounded-[7px] border-[3px] border-[#919191] bg-linear-to-b from-[#fdfdfd] to-[#dfe0e3]">
            <svg width="46" height="46" viewBox="-12 -12 24 24">
              {[22.5, 67.5, 112.5, 157.5, 202.5, 247.5, 292.5, 337.5].map((a) => <path key={a} d="M-2.600-6-1.700-11h3.400L2.600-6z" transform={`rotate(${a})`} fill="#d3dde6" stroke="#66737f" strokeWidth="1" />)}
              <circle r="7" fill="#d3dde6" stroke="#66737f" strokeWidth="1" /><circle r="6.300" fill="#d3dde6" /><circle r="2.800" fill="#fff" stroke="#66737f" strokeWidth="1.100" />
            </svg>
          </div>
        </div>
        <Section text="Properties (can.ex2)" cls="mt-[18px]" />
        <Section text="Display (SpreadSheetRepresentation)" open cls="mt-[18px]" />
        <div className="mt-[18px] flex h-[63px]">
          <div className="w-[323px] whitespace-nowrap">Field Association</div>
          <Combo text="Point Data" cls="w-[707px]" />
        </div>
        <div className="mt-[13px] flex h-[566px] rounded-[6px] border-[3px] border-[#8f8f8f] bg-white p-[2px]">
          <div className="flex w-[976px] shrink-0 flex-col overflow-hidden">
            <div className="flex h-[68px] shrink-0 items-center border-r-[3px] border-b-[3px] border-[#919191] bg-linear-to-b from-[#e6e7ed] to-[#d2d3d8] pl-[11px]">Composite Data Set Index</div>
            {rows.map((r, i) => <TreeRow key={i} r={r} />)}
          </div>
          <div className="flex w-[44px] shrink-0 flex-col pb-[3px]">
            <SBtn dir="u" cls="h-[44px]" />
            <div className="flex h-[300px] shrink-0 items-center justify-center border-[3px] border-[#919191] bg-linear-to-r from-[#f2f3f6] to-[#cbccd2]">
              <Fill id="dots1" w={28} h={52} />
            </div>
            <div className="min-h-0 flex-1 overflow-hidden"><Fill id="hatch" w={44} h={200} /></div>
            <SBtn dir="u" cls="h-[43px]" /><SBtn dir="d" cls="h-[43px]" />
          </div>
        </div>
        <Section text="View (SpreadSheet View)" open cls="mt-[17px]" />
        <div className="mt-[39px] flex items-center gap-[13px]"><Check /><span className="-mt-[2px]">Selection Only</span></div>
      </div>
    </div>
    <div className="pt-[749px] pl-[3px]"><svg width="9" height="728" className="block"><rect width="9" height="728" fill="url(#dots1)" /></svg></div>
  </div>
);

/* ---------- 3D scene ---------- */
type P = [number, number];
const along = (pts: P[], t: number): P => {
  const f = Math.min(t, 0.9999) * (pts.length - 1);
  const i = Math.floor(f);
  const k = f - i;
  return [pts[i][0] + (pts[i + 1][0] - pts[i][0]) * k, pts[i][1] + (pts[i + 1][1] - pts[i][1]) * k];
};
const rimTop: P[] = [[2293, 1168], [2345, 1170], [2393, 1172], [2441, 1177], [2489, 1184], [2537, 1194], [2585, 1205], [2636, 1218], [2687, 1226]];
const rimBot: P[] = [[2272, 1217], [2307, 1243], [2355, 1258], [2405, 1271], [2460, 1281], [2515, 1291], [2570, 1298], [2628, 1303], [2676, 1292]];
const shade: number[][][] = [
  [[130, 128, 120], [170, 167, 159], [184, 181, 173], [190, 187, 180], [180, 180, 174], [156, 156, 152], [84, 84, 82]],
  [[146, 143, 134], [178, 175, 166], [188, 185, 177], [194, 192, 184], [184, 183, 177], [160, 160, 156], [92, 92, 90]],
  [[168, 165, 154], [196, 193, 181], [206, 203, 191], [222, 218, 205], [212, 208, 197], [182, 180, 173], [112, 111, 107]],
  [[178, 175, 163], [202, 199, 186], [208, 205, 193], [222, 218, 205], [228, 223, 209], [212, 208, 195], [148, 146, 139]],
  [[174, 171, 160], [198, 195, 183], [198, 195, 184], [146, 147, 146], [140, 141, 141], [204, 200, 188], [178, 175, 165]],
  [[166, 163, 152], [184, 181, 170], [186, 183, 173], [84, 89, 93], [92, 96, 100], [112, 114, 114], [140, 140, 134]],
];
const mix = (u: number, v: number) => {
  const fu = Math.min(u, 0.9999) * 6;
  const fv = Math.min(v, 0.9999) * 5;
  const i = Math.floor(fu), j = Math.floor(fv), a = fu - i, b = fv - j;
  const c = [0, 1, 2].map((k) => Math.round((shade[j][i][k] * (1 - a) + shade[j][i + 1][k] * a) * (1 - b) + (shade[j + 1][i][k] * (1 - a) + shade[j + 1][i + 1][k] * a) * b));
  return `rgb(${c.join(',')})`;
};
const facets = () => {
  const out: React.ReactNode[] = [];
  const N = 34, M = 11;
  const pt = (u: number, v: number): P => {
    const a = along(rimTop, u), b = along(rimBot, u);
    const bulge = u > 0.85 ? Math.sin(Math.min(1, v * 1.15) * Math.PI) * 20 * (u - 0.85) : 0;
    return [a[0] + (b[0] - a[0]) * v + bulge * (v > 0.5 ? 1.200 : -1), a[1] + (b[1] - a[1]) * v];
  };
  for (let j = 0; j < M; j++) for (let i = 0; i < N; i++) {
    const q = [pt(i / N, j / M), pt((i + 1) / N, j / M), pt((i + 1) / N, (j + 1) / M), pt(i / N, (j + 1) / M)];
    const c = mix((i + 0.5) / N, (j + 0.5) / M);
    out.push(<polygon key={`${i}-${j}`} points={q.map((p) => p.map((n) => n.toFixed(1)).join(',')).join(' ')} fill={c} stroke={c} strokeWidth="1.200" />);
  }
  return out;
};
const tones: [number, number[]][] = [[0, [122, 120, 112]], [0.04, [148, 146, 137]], [0.13, [165, 162, 153]], [0.28, [179, 176, 167]], [0.42, [189, 186, 178]], [0.5, [192, 190, 182]], [0.55, [186, 186, 180]], [0.66, [172, 172, 167]], [0.78, [158, 158, 154]], [0.88, [136, 136, 133]], [0.95, [106, 106, 103]], [1, [70, 70, 68]]];
const tone = (t: number) => {
  const i = Math.max(0, tones.findIndex(([o]) => o >= t) - 1);
  const [o0, c0] = tones[i], [o1, c1] = tones[i + 1];
  const k = (t - o0) / (o1 - o0);
  return `rgb(${c0.map((c, n) => Math.round(c + (c1[n] - c) * k)).join(',')})`;
};
/* flat-shaded strips: narrow towards the silhouette edges, as on a round wall */
const STRIPS = 34;
const edge = (i: number) => (1 - Math.cos((Math.PI * i) / STRIPS)) / 2;
const bands = Array.from({ length: STRIPS }, (_, i) => ({ a: edge(i), b: edge(i + 1), c: tone((edge(i) + edge(i + 1)) / 2) }));
const Scene = () => (
  <svg width="2790" height="1001" viewBox="1112 617 2790 1001" className="block">
    <defs>
      <linearGradient id="sky" x1="0" y1="0" x2="0" y2="1"><stop offset="0" stopColor="#000028" /><stop offset="1" stopColor="#52566d" /></linearGradient>
      <linearGradient id="cyl" gradientUnits="userSpaceOnUse" x1="2380" y1="940" x2="2751" y2="1084">
        {bands.map(({ a, b, c }) => <React.Fragment key={a}><stop offset={a} stopColor={c} /><stop offset={b} stopColor={c} /></React.Fragment>)}
      </linearGradient>
    </defs>
    <rect x="1112" y="617" width="2790" height="1001" fill="url(#sky)" />
    <path d="M2074 1203 2187 1185.500 2272 1204 2661 1297 2761 1320 2751 1366 2074 1204z" fill="#a6a396" />
    <path d="M2074 1203 2751 1365 2728 1475 2055 1309z" fill="#c2bfb8" />
    <path d="M2481 690q2-8 9-8c40 0 110 28 155 46 55 22 105 48 150 72 26 14 52 26 56 36L2687 1228 2678 1262 2400 1240 2280 1200C2360 1010 2430 830 2481 690z" fill="url(#cyl)" />
    {facets()}
    <g fill="none">
      <path d="M1232 1495 1292 1516" stroke="#e01515" strokeWidth="5" /><path d="M1232 1495 1215 1548" stroke="#16d81e" strokeWidth="4" />
    </g>
    <path d="M1286 1509 1301 1521 1284 1522z" fill="#e01515" /><path d="M1210 1540 1220 1542 1212 1557z" fill="#16d81e" />
    <circle cx="1228" cy="1496" r="6.500" fill="#8a7a10" /><circle cx="1233" cy="1496" r="4" fill="#f2e414" />
    <g fill="#fff" fontFamily="Liberation Sans" fontWeight="700" fontSize="21" textAnchor="middle" letterSpacing="0">
      <text x="1235" y="1491">Y</text><text x="1297" y="1517">X</text><text x="1224" y="1548">Z</text>
    </g>
  </svg>
);

/* ---------- right side ---------- */
const viewBtnGlyphs = [
  <><path d="M2 2h22v22H2z" fill="#dfe5f8" /><path d="M2 2h22v22H2zM13 2v22" /></>,
  <><path d="M2 2h22v22H2z" fill="#dfe5f8" /><path d="M2 2h22v22H2zM2 13h22" /></>,
  <><path d="M2 2h22v22H2z" fill="#fff" /><path d="M2 3h22" strokeWidth="5" /></>,
  <path d="m3 4 20 18M23 4 3 22" strokeWidth="3" />,
];
const ViewButtons = () => (
  <div className="flex gap-[3px]">
    {viewBtnGlyphs.map((g, i) => (
      <div key={i} className="flex h-[57px] w-[59px] items-center justify-center rounded-[7px] border-[3px] border-[#919191] bg-linear-to-b from-[#fbfbfc] to-[#e3e4e8]">
        <svg width="26" height="26" viewBox="0 0 26 26" fill="none" stroke="#000" strokeWidth="2.600">{g}</svg>
      </div>
    ))}
  </div>
);

const cols = 'grid grid-cols-[131px_279px_277px_795px_631px_350px_275px]';
const heads = ['', 'Block Number', 'Point ID', 'ACCL', 'DISPL', 'GlobalNodeId', 'PedigreeNodeId'];
const data: [number, string[], string[], string][] = [
  [0, ['-1.98e+07', '-1.05e+07', '-2.85e+07'], ['-0.689', '-0.55', '-1.54'], '2'],
  [1, ['-1.52e+07', '-3.65e+06', '-1.64e+07'], ['-0.731', '-0.482', '-1.51'], '43'],
  [2, ['-7.05e+06', '9.64e+05', '-4.17e+06'], ['-0.679', '-0.476', '-1.64'], '1724'],
  [3, ['-6.3e+06', '-6.89e+06', '-2.98e+05'], ['-0.624', '-0.537', '-1.65'], '1683'],
  [4, ['-1.23e+07', '-1.37e+07', '1.33e+07'], ['-0.861', '-0.586', '-1.92'], '1'],
  [5, ['-7.64e+06', '5.6e+06', '1.33e+07'], ['-0.86', '-0.51', '-1.9'], '42'],
  [6, ['-1.15e+07', '2.06e+06', '2.6e+07'], ['-0.866', '-0.513', '-2.04'], '1723'],
  [7, ['-6.44e+06', '-9.63e+06', '2.35e+07'], ['-0.804', '-0.575', '-2.04'], '1682'],
  [8, ['-2.36e+06', '-1.5e+07', '-2.49e+06'], ['-0.494', '-0.489', '-1.14'], '3'],
  [9, ['-1.78e+06', '-6.2e+06', '-2.03e+07'], ['-0.553', '-0.433', '-1.11'], '44'],
];
const td = 'flex items-center overflow-hidden border-r-[2.500px] border-b-[3px] border-[#c8c8c8] pb-[5px] pl-[8px]';
const ToolBtn = ({ children }: Kids) => (
  <div className="flex h-[67px] w-[69px] shrink-0 items-center justify-center rounded-[7px] border-[3px] border-[#919191] bg-linear-to-b from-[#fdfdfd] to-[#e0e1e5]">{children}</div>
);

const Sheet = () => (
  <div className="ml-[2px] flex h-[1013px] w-[2801px] shrink-0 flex-col border-[4px] border-[#0000f5] bg-[#efefef] px-[1px]">
    <div className="flex h-[77px] shrink-0 items-center pb-[6px] whitespace-nowrap">
      <span className="w-[195px] font-bold tracking-[0.2px]">Showing</span>
      <Combo text="can.ex2" cls="w-[228px]" />
      <span className="w-[213px] pl-[5px] font-bold tracking-[0.2px]">Attribute:</span>
      <Combo text="Point Data" cls="w-[270px]" />
      <span className="w-[217px] pl-[5px] font-bold tracking-[0.4px]">Precision:</span>
      <Spin text="3" cls="w-[153px]" right />
      <div className="ml-[5px] flex gap-[6px]">
        <ToolBtn><svg width="42" height="42" viewBox="0 0 24 24"><path d="M3 3h16v16H3z" fill="#eaf4e3" stroke="#6d9a50" strokeWidth="1.500" strokeDasharray="2 1.800" /><Cursor x={13} y={11} k={1.400} c="#6b6b5c" /></svg></ToolBtn>
        <ToolBtn><svg width="42" height="42" viewBox="0 0 24 24" fill="#ffeb85" stroke="#c79408" strokeWidth="1.700"><path d="M2 2h17l3 3v17H2zM2 8.500h20M2 15.300h20M8.500 2v20M15.300 2v20" /></svg></ToolBtn>
        <ToolBtn><svg width="44" height="42" viewBox="0 0 24 24" fill="none" stroke="#8d8d74" strokeWidth="1.500"><path d="M5 1.500c-3.500 0-2 3.500-2 6.500S2.500 11.500.8 12c1.700.5 2.200 1 2.200 4s-1.500 6.500 2 6.500M19 1.500c3.500 0 2 3.500 2 6.500s.5 3.500 2.200 4c-1.700.5-2.200 1-2.200 4s1.500 6.500-2 6.500" /><path d="M6.500 17.500h2.600M10.700 17.500h2.600M14.900 17.500h2.600" stroke="#58a0dc" strokeWidth="3" /></svg></ToolBtn>
      </div>
    </div>
    <div className="flex h-[926px] flex-col rounded-[5px] border-[4px] border-[#9c9c9a] bg-[#efefef]">
      <div className="flex h-[873px] shrink-0">
        <div className="flex w-[2738px] shrink-0 flex-col overflow-hidden">
          <div className={`h-[69px] shrink-0 ${cols}`}>
            {heads.map((h, i) => (
              <div key={h} className={`flex items-center overflow-hidden border-r-[4px] border-b-[4px] border-[#858585] bg-linear-to-b from-[#e6e7ed] to-[#d2d3d8] whitespace-nowrap ${i === 6 ? 'pl-[101px]' : 'justify-center'}`}>{h}</div>
            ))}
          </div>
          {data.map(([n, a, d, g]) => (
            <div key={n} className={`h-[83.350px] shrink-0 ${cols} ${n % 2 ? 'bg-[#e8e8e8]' : 'bg-white'}`}>
              <div className="flex items-center border-r-[3px] border-b-[4px] border-[#858585] bg-linear-to-b from-[#e6e7ed] to-[#d2d3d8] pl-[11px]">{n}</div>
              <div className={td}>2</div>
              <div className={td}>{n}</div>
              <div className={td}>{a.map((v, i) => <span key={i} className="w-[264px] shrink-0">{v}</span>)}</div>
              <div className={td}>{d.map((v, i) => <span key={i} className="w-[208.500px] shrink-0">{v}</span>)}</div>
              <div className={td}>{g}</div>
              <div className={td}>{g}</div>
            </div>
          ))}
        </div>
        <div className="flex w-[43px] shrink-0 flex-col pb-[2px]">
          <SBtn dir="u" cls="h-[44px]" />
          <div className="h-[73px] shrink-0 border-[3px] border-[#919191] bg-linear-to-r from-[#f2f3f6] to-[#cbccd2]" />
          <div className="min-h-0 flex-1 overflow-hidden"><Fill id="hatch" w={43} h={700} /></div>
          <SBtn dir="u" cls="h-[43px]" /><SBtn dir="d" cls="h-[43px]" />
        </div>
      </div>
      <div className="flex h-[43px] shrink-0">
        <SBtn dir="l" cls="w-[44px]" />
        <div className="flex w-[1626px] shrink-0 items-center justify-center border-[3px] border-[#919191] bg-linear-to-b from-[#f2f3f6] to-[#cfd0d5]"><Fill id="dots1" w={52} h={30} /></div>
        <Fill id="hatch" w={979} h={43} />
        <SBtn dir="l" cls="w-[43px]" /><SBtn dir="r" cls="w-[43px]" />
      </div>
    </div>
  </div>
);

const RightPanel = () => (
  <div className="flex w-[2811px] shrink-0 flex-col">
    <div className="flex h-[72px] shrink-0 items-end">
      <div className="flex h-[67px] w-[341px] items-center rounded-tl-[8px] rounded-tr-[6px] border-t-[3px] border-r-[3px] border-l-[3px] border-[#8f8f8f] pb-[3px] pl-[28px]">
        <svg width="26" height="26" viewBox="0 0 26 26"><path d="M2 2h22v22H2z" fill="#f5f5f5" stroke="#000" strokeWidth="2.600" /><path d="M1 3.500h24" stroke="#000" strokeWidth="5" /></svg>
        <span className="ml-[16px]">Layout #1</span>
        <svg width="22" height="22" viewBox="0 0 22 22" className="ml-[13px]"><path d="m1 1 20 20M21 1 1 21" stroke="#000" strokeWidth="3" /></svg>
      </div>
      <div className={`flex h-[59px] w-[96px] items-center justify-center rounded-tr-[6px] border-t-[3px] border-r-[3px] border-b-[3px] border-[#8f8f8f] ${grad}`}>
        <svg width="24" height="24" viewBox="0 0 24 24"><path d="M12 0v24M0 12h24" stroke="#000" strokeWidth="3" /></svg>
      </div>
      <div className="h-[3px] flex-1 bg-[#8f8f8f]" />
    </div>
    <div className="flex h-[2172px] flex-col border-x-[3px] border-b-[3px] border-[#8f8f8f]">
      <div className="flex h-[71px] shrink-0 items-center pb-[2px] pl-[7px]">
        {viewIcons.map((g, i) => <div key={i} className="flex w-[61.100px] justify-center"><Ic s={36}>{g}</Ic></div>)}
        <span className="-mt-[8px] mr-[29px] ml-auto">RenderView1</span>
        <div className="mr-[8px]"><ViewButtons /></div>
      </div>
      <div className="ml-[7px] h-[1001px] w-[2790px] shrink-0"><Scene /></div>
      <div className="flex h-[20px] shrink-0 items-center pl-[933px]"><Fill id="dots1" w={926} h={9} /></div>
      <div className="flex h-[60px] shrink-0 items-start">
        <span className="mr-[29px] ml-auto">SpreadSheetView1</span>
        <div className="mr-[8px]"><ViewButtons /></div>
      </div>
      <Sheet />
    </div>
  </div>
);

const WinBtn = ({ close, children }: Kids & { close?: boolean }) => (
  <div className={`flex h-[43px] w-[43px] items-center justify-center rounded-full border-2 ${close ? 'border-[#38322c] bg-linear-to-b from-[#f5855f] to-[#e04a1a]' : 'border-[#35342f] bg-linear-to-b from-[#8b8a82] to-[#62615a]'}`}>
    <svg width="21" height="21" viewBox="0 0 21 21" fill="none" stroke="#35342f" strokeWidth="2.500">{children}</svg>
  </div>
);

const menus = ['File', 'Edit', 'View', 'Sources', 'Filters', 'Tools', 'Catalyst', 'Macros', 'Help'];

export default function App() {
  return (
    <div className="flex h-[2803px] w-[3917px] flex-col overflow-hidden bg-white font-['DejaVu_Sans',sans-serif] text-[36px] leading-[44px] tracking-[0.5px] text-black">
      <Defs />
      <div className="flex h-[77px] shrink-0 items-center justify-between rounded-t-[18px] border-t-[3px] border-b-[3px] border-t-[#5a5950] border-b-black bg-linear-to-b from-[#4d4c46] to-[#3c3b37] pr-[29px] pl-[61px]">
        <span className="-mt-[2px] font-['Open_Sans',sans-serif] text-[38px] font-bold tracking-[0.8px] text-[#dfdbd2]">ParaView 4.1.0-1440-g6a36310 64-bit</span>
        <div className="flex gap-[7px]">
          <WinBtn><path d="M1 10.500h19" /></WinBtn>
          <WinBtn><path d="M2 2h17v17H2z" /></WinBtn>
          <WinBtn close><path d="m3 3 15 15M18 3 3 18" /></WinBtn>
        </div>
      </div>
      <div className="flex min-h-0 flex-1 flex-col border-b-[3px] border-l-[3px] border-[#a8a29c] bg-[#efefef]">
        <div className="-ml-[3px] flex min-h-0 flex-1 flex-col">
          <div className="flex h-[76px] shrink-0 items-center gap-[46px] border-b-[3px] border-[#bababa] pl-[32px]">
            {menus.map((m) => <span key={m}><U>{m[0]}</U>{m.slice(1)}</span>)}
          </div>
          <div className={`h-[108px] ${toolbar}`}>
            <Grip />
            <Cell><OpenIcon /></Cell><Cell><OpenRecentIcon /></Cell><Sep />
            <Cell><ServerIcon /></Cell><Cell><ServerIcon off /></Cell><Sep />
            <Cell><Curl fill="url(#red)" stroke={OL} /></Cell><Cell><Curl fill="url(#gy)" stroke={G} flip /></Cell><Sep />
            <Cell><Ic><ExtractArrow /></Ic></Cell><Sep />
            <Cell><Ic><Help /></Ic></Cell><Cell><PickColor /></Cell>
            <div className="w-[24px]" /><Grip />
            {[<First />, <Prev />, <Play />, <Next />, <Last />, <Loop />].map((x, i) => <Cell key={i} cls="w-[94px]">{x}</Cell>)}
            <div className="w-[22px]" /><Grip />
            <span className="w-[119px] shrink-0 pl-[2px]">Time:</span>
            <div className="flex h-[62px] w-[398px] shrink-0 items-center rounded-[7px] border-[3px] border-[#919191] pl-[13px] tracking-[0.2px] text-[#c3c3c3]">0.000400087</div>
            <Spin text="4" cls="ml-[3px] w-[152px]" />
            <span className="ml-[13px]">of 44</span>
          </div>
          <div className={`h-[108px] ${toolbar}`}>
            <Grip />
            <Cell><Bar /></Cell><Cell><EditMap /></Cell><Cell><Rescale /></Cell><Cell><Rescale c /></Cell>
            <Combo cls="ml-[1px] w-[415px]" off /><Combo cls="ml-[12px] w-[238px]" off />
            <div className="w-[24px]" /><Grip />
            <Combo text="Representation" cls="ml-[1px] w-[415px]" off />
            <div className="w-[24px]" /><Grip />
            <Cell><ResetCamera /></Cell><Cell><ZoomData /></Cell><Cell><ZoomBox /></Cell>
            <div className="w-[2px]" />
            <Cell><AxisView label="+X" box="#a0a0a0" arm="#dcdcdc" /></Cell>
            <Cell><AxisView label="-X" left box="#a0a0a0" arm="#dcdcdc" /></Cell>
            <Cell><AxisView label="+Y" left box="#d6d6d6" arm="#a8a8a8" /></Cell>
            <Cell><AxisView label="-Y" box="#d6d6d6" arm="#a8a8a8" /></Cell>
            <Cell><AxisView label="+Z" box="#b8b8b8" arm="#a8a8a8" /></Cell>
            <Cell><AxisView label="-Z" left box="#b8b8b8" arm="#a8a8a8" /></Cell>
            <div className="w-[24px]" /><Grip />
            <Cell><ShowAxes /></Cell><Cell><Rot kind="c" /></Cell><Cell><Rot kind="g" /></Cell><Cell><Rot kind="p" /></Cell>
          </div>
          <div className={`h-[105px] ${toolbar}`}>
            <Grip />
            <div className="-ml-[2px] flex">
              {[<Calc />, <Contour />, <Clip />, <Slice />, <Threshold />, <Subset />, <Glyph />, <Stream />, <Warp />, <Group />, <Level />].map((x, i) => <Cell key={i} cls="w-[97.300px]">{x}</Cell>)}
            </div>
            <div className="w-[22px]" /><Grip />
            <div className="-ml-[1px] flex">
              {[<SelFrustum />, <PlotTime />, <PlotLine />, <PlotSel />, <Probe />].map((x, i) => <Cell key={i} cls="w-[97.300px]">{x}</Cell>)}
            </div>
          </div>
          <div className="flex h-[2244px] shrink-0"><LeftPanel /><RightPanel /></div>
          <div className="flex min-h-0 flex-1 items-start pt-[5px] pl-[1923px]">
            <div className="flex h-[73px] w-[1924px] items-center gap-[3px] rounded-[4px] border-[2.500px] border-[#a5a5a5] pl-[3px]">
              <div className="flex h-[58px] w-[60px] items-center justify-center rounded-[6px] border-[3px] border-[#9a9a9a] bg-[#f6f6f6]">
                <svg width="28" height="28" viewBox="0 0 28 28"><path d="m5 4 18 20M23 4 5 24" stroke="#b5b5b5" strokeWidth="8" /></svg>
              </div>
              <div className="h-[70px] w-[1841px] rounded-[7px] border-[3px] border-[#8f8f8f]" />
            </div>
            <svg width="40" height="40" viewBox="0 0 40 40" className="mt-[38px] ml-[28px]"><path d="M3 38 40 1M15 38 40 13M27 38 40 25" stroke="#333" strokeWidth="2.500" /><path d="M7 38 40 5M19 38 40 17" stroke="#fff" strokeWidth="2.500" /></svg>
          </div>
        </div>
      </div>
    </div>
  );
}
